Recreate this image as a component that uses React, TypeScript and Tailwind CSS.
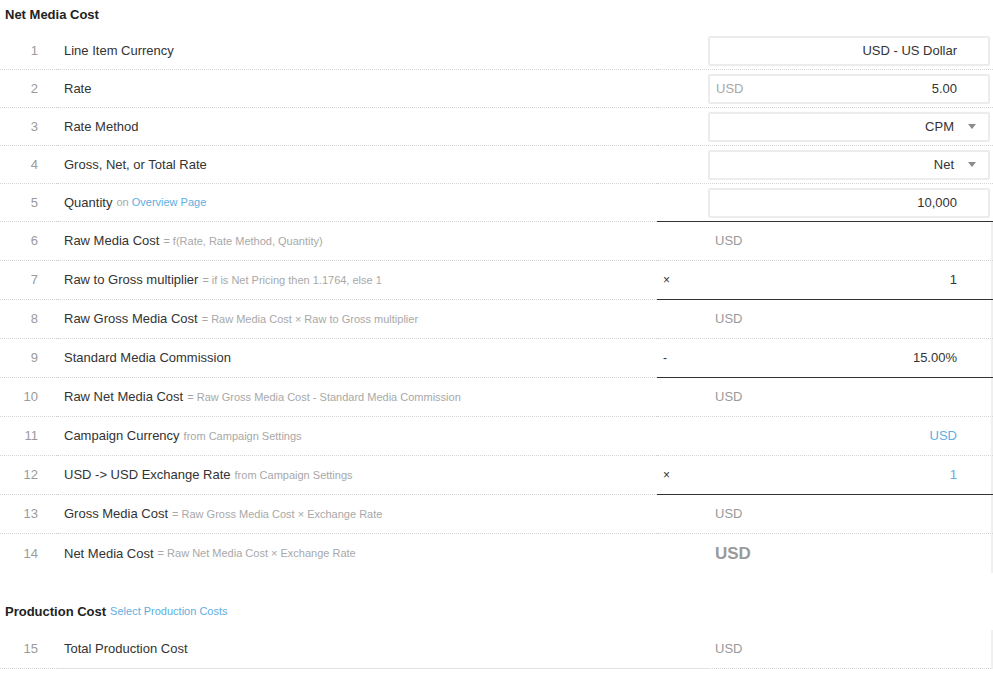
import React from "react";

type Row = {
  n: number;
  label: string;
  note?: React.ReactNode;
  op?: string;
  value?: React.ReactNode;
  input?: "text" | "prefix" | "select";
  prefix?: string;
  heavy?: boolean; // dark rule under the value area
  tall?: boolean;
  last?: boolean;
  edge?: boolean;
};

const Link = ({ children }: { children: React.ReactNode }) => (
  <span className="text-[#5eaee0]">{children}</span>
);

const Note = ({ children }: { children: React.ReactNode }) => (
  <span className="ml-[4px] text-[11px] text-[#a8a8a8]">{children}</span>
);

const Gray = ({ big }: { big?: boolean }) => (
  <span className={big ? "pl-[7px] text-[17px] font-bold text-[#9a9a9a]" : "pl-[7px] text-[13px] text-[#9a9a9a]"}>USD</span>
);

const Right = ({ children, blue }: { children: React.ReactNode; blue?: boolean }) => (
  <span className={`ml-auto pr-[34px] text-[13px] ${blue ? "text-[#5eaee0]" : "text-[#333]"}`}>{children}</span>
);

const ROWS: Row[] = [
  { n: 1, label: "Line Item Currency", input: "text", value: "USD - US Dollar" },
  { n: 2, label: "Rate", input: "prefix", prefix: "USD", value: "5.00" },
  { n: 3, label: "Rate Method", input: "select", value: "CPM" },
  { n: 4, label: "Gross, Net, or Total Rate", input: "select", value: "Net" },
  { n: 5, label: "Quantity", note: <>on <Link>Overview Page</Link></>, input: "text", value: "10,000", heavy: true },
  { n: 6, label: "Raw Media Cost", note: "= f(Rate, Rate Method, Quantity)", value: <Gray />, tall: true, edge: true },
  { n: 7, label: "Raw to Gross multiplier", note: "= if is Net Pricing then 1.1764, else 1", op: "×", value: <Right>1</Right>, heavy: true, tall: true, edge: true },
  { n: 8, label: "Raw Gross Media Cost", note: "= Raw Media Cost × Raw to Gross multiplier", value: <Gray />, tall: true, edge: true },
  { n: 9, label: "Standard Media Commission", op: "-", value: <Right>15.00%</Right>, heavy: true, tall: true, edge: true },
  { n: 10, label: "Raw Net Media Cost", note: "= Raw Gross Media Cost - Standard Media Commission", value: <Gray />, tall: true, edge: true },
  { n: 11, label: "Campaign Currency", note: "from Campaign Settings", value: <Right blue>USD</Right>, tall: true, edge: true },
  { n: 12, label: "USD -> USD Exchange Rate", note: "from Campaign Settings", op: "×", value: <Right blue>1</Right>, heavy: true, tall: true, edge: true },
  { n: 13, label: "Gross Media Cost", note: "= Raw Gross Media Cost × Exchange Rate", value: <Gray />, tall: true, edge: true },
  { n: 14, label: "Net Media Cost", note: "= Raw Net Media Cost × Exchange Rate", value: <Gray big />, tall: true, edge: true, last: true },
];

function Caret() {
  return (
    <svg width="8" height="5" viewBox="0 0 8 5" className="ml-[14px] mr-[12px]">
      <path d="M0 0 L8 0 L4 5 Z" fill="#8a8a8a" />
    </svg>
  );
}

function Input({ row }: { row: Row }) {
  return (
    <div className="flex h-[30px] w-[282px] items-center rounded-[2px] border-2 border-[#ececec] bg-white text-[13px] text-[#333]">
      {row.input === "prefix" && <span className="pl-[6px] text-[#a8a8a8]">{row.prefix}</span>}
      <span className={`ml-auto ${row.input === "select" ? "" : "pr-[31px]"}`}>{row.value}</span>
      {row.input === "select" && <Caret />}
    </div>
  );
}

function LineRow({ row }: { row: Row }) {
  const dotted = row.last ? "" : "border-b border-dotted border-[#d6d6d6]";
  const rightRule = row.last ? "" : row.heavy ? "border-b border-solid border-[#333]" : "border-b border-dotted border-[#d6d6d6]";
  return (
    <div className={`flex ${row.tall ? "h-[39px]" : "h-[38px]"}`}>
      <div className={`flex w-[57px] shrink-0 items-center justify-end pr-[19px] text-[13px] text-[#9a9a9a] ${dotted}`}>{row.n}</div>
      <div className={`flex flex-1 items-center pl-[7px] text-[13px] text-[#333] ${dotted}`}>
        <span>{row.label}</span>
        {row.note && <Note>{row.note}</Note>}
      </div>
      <div className={`flex w-[336px] shrink-0 items-center ${rightRule}`}>
        <div className="w-[51px] shrink-0 pl-[6px] text-[12px] text-[#333]">{row.op}</div>
        {row.input ? (
          <Input row={row} />
        ) : (
          <div className="flex h-full w-[285px] items-center">
            <div className="flex h-full flex-1 items-center">{row.value}</div>
            {row.edge && <div className="h-full w-[2px] bg-[#efefef]" />}
          </div>
        )}
      </div>
    </div>
  );
}

export default function App() {
  return (
    <div className="h-[688px] w-[993px] overflow-hidden bg-white" style={{ fontFamily: '"Liberation Sans", Arial, sans-serif' }}>
      <div className="flex h-[32px] items-start pl-[5px] pt-[5px] text-[13px] font-bold text-[#222]">Net Media Cost</div>
      {ROWS.map((r) => (
        <LineRow key={r.n} row={r} />
      ))}
      <div className="flex h-[57px] items-center pl-[5px] pt-[20px] text-[13px]">
        <span className="font-bold text-[#222]">Production Cost</span>
        <span className="ml-[4px] text-[11px] text-[#5eaee0]">Select Production Costs</span>
      </div>
      <div className="flex h-[39px]">
        <div className="flex w-[57px] shrink-0 items-center justify-end border-b border-dotted border-[#d6d6d6] pr-[19px] text-[13px] text-[#9a9a9a]">15</div>
        <div className="flex flex-1 items-center border-b border-solid border-[#e2e2e2] pl-[7px] text-[13px] text-[#333]">Total Production Cost</div>
        <div className="flex w-[336px] shrink-0 items-center">
          <div className="h-full w-[51px] shrink-0 border-b border-solid border-[#e2e2e2]" />
          <div className="flex h-full w-[283px] items-center border-b border-dotted border-[#d6d6d6]">
            <Gray />
          </div>
          <div className="h-full w-[2px] bg-[#efefef]" />
        </div>
      </div>
    </div>
  );
}
